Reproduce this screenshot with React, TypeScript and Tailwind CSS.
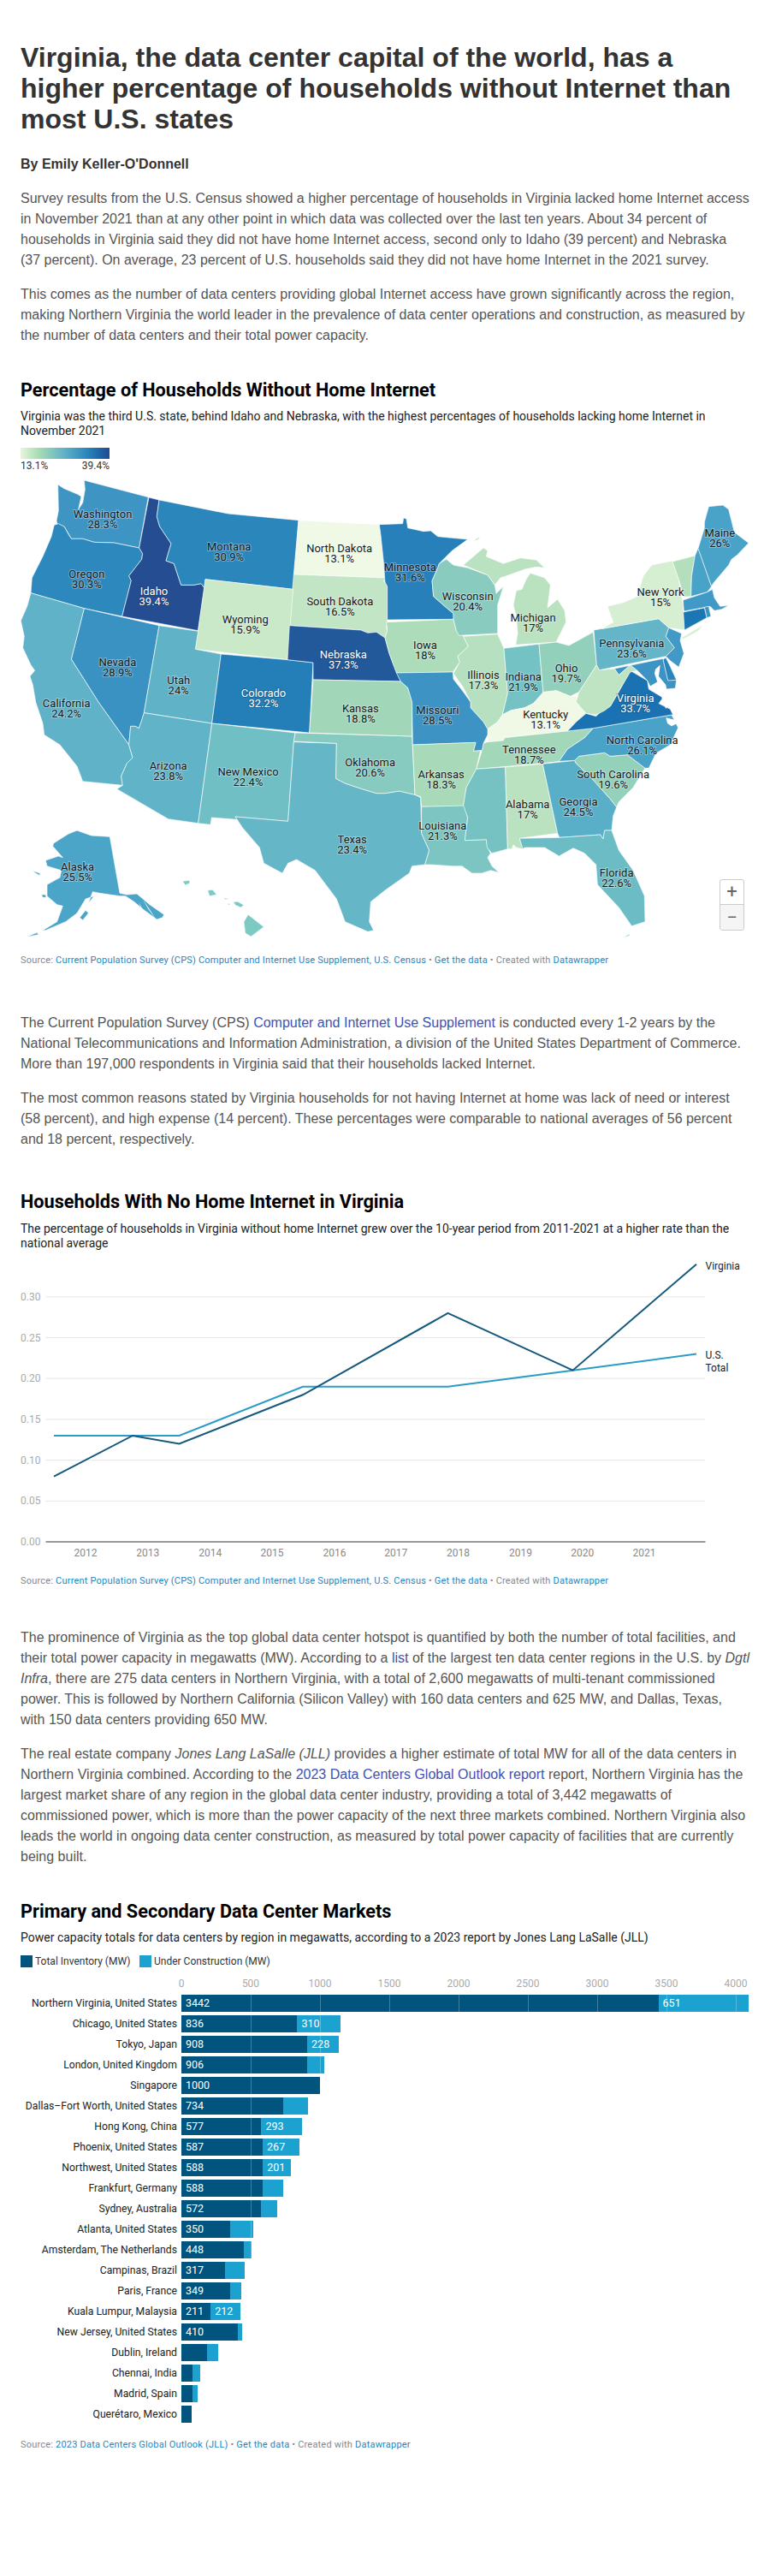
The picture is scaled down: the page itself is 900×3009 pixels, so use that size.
import React from 'react';

// points were read off 3x crops, each quadrant of the map has its own offset
const shift = (s: string, ox: number, oy: number) =>
  s.trim().split(/\s+/).map((p) => {
    const [x, y] = p.split(',').map(Number);
    return `${x + ox},${y + oy}`;
  }).join(' ');
const a = (s: string) => shift(s, 0, 1500);
const b = (s: string) => shift(s, 1350, 1500);
const c = (s: string) => shift(s, 0, 2460);
const d = (s: string) => shift(s, 1350, 2460);

type State = { fill: string; pts: string[] };

const states: State[] = [
  { fill: '#3e95c4', pts: [a('295,183 520,242 488,420 400,402 330,400 290,388 250,388 240,370 225,345 200,335 198,325 205,290 203,198 225,212 272,232 285,240 275,285 290,262 298,215')] }, // WA
  { fill: '#2d88be', pts: [a('205,335 225,345 240,372 250,388 290,388 330,400 400,402 488,420 500,440 497,460 452,518 460,535 428,660 295,632 108,578 112,525 150,450 180,380 190,340')] }, // OR
  { fill: '#254e92', pts: [a('522,243 558,252 550,310 560,345 600,405 582,465 610,475 635,550 680,550 705,545 717,560 695,710 428,660 460,535 452,518 497,460 500,440 488,420')] }, // ID
  { fill: '#2b86bc', pts: [a('558,252 800,300 1047,323 1028,565 720,530 717,560 705,545 680,550 635,550 610,475 582,465 600,405 560,345 550,310')] }, // MT
  { fill: '#f0f8e6', pts: [a('1047,323 1330,338 1335,375 1345,470 1358,525 1030,513')] }, // ND
  { fill: '#c1e5c5', pts: [a('1030,513 1358,525 1345,535 1358,552 1358,680 1355,700 1358,712 1350,735 1320,715 1290,718 1265,708 1015,692')] }, // SD
  { fill: '#c9e9c9', pts: [a('720,530 1028,565 1008,812 685,775')] }, // WY
  { fill: '#3a92c2', pts: [a('295,632 558,692 505,998 495,1030 487,1052 475,1045 458,1045 452,1110 345,960 250,810')] }, // NV
  { fill: '#5fb2c8', pts: [a('108,578 295,632 250,810 345,960'), c('452,150 465,195 445,215 425,260 430,292 290,278 270,225 210,150 155,115 150,75 125,0'), a('115,900 105,870 122,850 108,830 80,770 85,730 73,675 95,625')] }, // CA
  { fill: '#60b3c7', pts: [a('558,692 695,712 685,775 775,792'), c('743,75 505,38')] }, // UT
  { fill: '#247eb8', pts: [a('775,792 1008,812 1098,822'), c('1085,108 743,75')] }, // CO
  { fill: '#61b4c7', pts: [c('505,38 743,75 695,425 590,410 410,305 430,292 425,260 445,215 465,195 452,150 458,85 475,85 487,92 495,70')] }, // AZ
  { fill: '#6fbfc5', pts: [c('743,75 1035,108 1030,140 1010,418 825,402 832,412 742,405 738,430 695,425')] }, // NM
  { fill: '#65b6c6', pts: [c('1030,140 1180,145 1178,268 1210,285 1270,305 1320,320'), d('0,320 50,312 105,325 125,335 128,460 155,520 140,570 95,575 85,600 0,660'), c('1300,700 1295,770 1310,800 1290,805 1210,770 1180,690 1105,590 1040,552 1010,565 990,600 925,565 910,510 850,440 825,402 1010,418')] }, // TX
  { fill: '#87cabf', pts: [c('1035,108'), d('95,120 105,325 50,312 0,320'), c('1320,320 1270,305 1210,285 1178,268 1180,145 1030,138')] }, // OK
  { fill: '#21599b', pts: [a('1015,692 1265,708 1290,718 1320,715 1350,735'), b('15,790 30,830 55,888'), a('1098,882 1098,822 1008,812')] }, // NE
  { fill: '#a1d6b9', pts: [a('1098,882'), b('55,888 80,910 95,960'), d('95,120'), c('1085,108')] }, // KS
  { fill: '#acdcba', pts: [b('5,680 240,670 250,710 275,730 292,765 255,800 262,820 238,855 40,858 15,790 0,735 8,710')] }, // IA
  { fill: '#2880ba', pts: [a('1330,338'), b('62,335 65,315 75,318 80,350 135,362 160,360 185,380 235,385 290,390 235,430 190,475 185,490 165,535 170,590 210,625 240,650 240,670 8,672 8,555 0,540'), a('1345,470 1335,375')] }, // MN
  { fill: '#89cbbe', pts: [b('190,475 215,460 240,480 290,490 360,515 385,550 390,580 415,555 395,620 395,720 260,727 250,710 240,670 240,650 210,625 170,590 165,535 185,490')] }, // WI
  { fill: '#bae2c1', pts: [b('275,480 345,420 360,430 355,450 415,475 475,455 530,462 560,490 530,487 490,495 435,515 405,525 385,550 360,515')] }, // MI upper
  { fill: '#bae2c1', pts: [b('510,508 560,525 580,550 570,630 605,600 630,640 635,680 600,750 458,760 465,720 460,660 450,620 460,570 480,565 495,530')] }, // MI lower
  { fill: '#bae2c1', pts: [b('310,395 335,378 325,392')] },
  { fill: '#b6e0bf', pts: [b('275,730 395,722 417,772 430,930 412,1005'), d('395,70 360,95 345,70 300,20 300,0'), b('275,910 240,860 262,820 255,800 292,765')] }, // IL
  { fill: '#74c2c4', pts: [b('417,772 540,757 555,930 520,965 490,980 440,990 412,1005 430,930')] }, // IN
  { fill: '#93d0bc', pts: [b('540,757 600,750 645,762 730,715 742,830 710,880 680,925 650,940 600,920 555,930')] }, // OH
  { fill: '#f0f8e6', pts: [d('440,30 490,20 520,5 555,-35 600,-40 650,-20 680,-20 670,0 705,40 670,70 640,102 420,125 415,135 360,140 360,95 395,70 412,45')] }, // KY
  { fill: '#a3d7b9', pts: [d('360,140 415,135 420,125 730,92 700,125 640,165 610,208 555,215 320,235 340,170 345,145')] }, // TN
  { fill: '#3d93c3', pts: [b('40,858 238,855 240,880 275,925 300,960'), d('300,20 345,70 360,95 360,115 345,145 340,170 310,172 318,142 97,150 95,0'), b('80,910 55,888')] }, // MO
  { fill: '#a8dab9', pts: [d('97,150 318,142 310,172 335,170 320,235 285,300 275,365 128,367 125,332 105,325')] }, // AR
  { fill: '#7cc5c2', pts: [d('128,367 278,363 290,405 280,485 355,482 360,510 370,530 360,545 375,575 400,598 370,590 340,600 305,600 270,575 235,575 160,570 140,570 155,520 128,460')] }, // LA
  { fill: '#76c2c3', pts: [d('320,235 422,228 430,515 375,530 358,510 355,482 280,485 290,405 275,362 285,300')] }, // MS
  { fill: '#bae2c1', pts: [d('422,228 553,217 605,460 472,478 483,515 460,510 450,500 445,515 430,515')] }, // AL
  { fill: '#5aafc8', pts: [d('553,217 665,205 670,215 720,262 790,340 812,368 800,400 795,450 770,450 765,480 755,465 612,475 605,460')] }, // GA
  { fill: '#6cbcc5', pts: [d('472,478 612,475 755,465 765,480 770,450 795,450 820,520 870,590 910,680 912,770 865,785 820,720 745,640 740,570 700,530 660,512 610,540 560,510 490,510 483,515')] }, // FL
  { fill: '#6cbcc5', pts: [d('835,825 860,812 855,820')] },
  { fill: '#94d1bb', pts: [d('665,205 680,190 770,178 790,190 850,185 912,232 870,300 820,350 812,368 790,340 720,262 670,215')] }, // SC
  { fill: '#49a3c9', pts: [d('610,208 640,165 700,125 730,92 1005,45 1028,90 1000,150 950,180 925,232 912,232 850,185 790,190 770,178 680,190 665,205')] }, // NC
  { fill: '#1b72b3', pts: [d('640,102 670,70 705,40 740,50 770,20'), b('790,975 830,905 860,850 920,885 925,915 975,945 960,965 1000,985 1010,1005'), d('1005,45 730,92')] }, // VA
  { fill: '#bfe4c3', pts: [b('742,830 752,848 805,843 820,865 860,830 885,850 860,855 830,905 790,975 770,990 740,1005 705,1000 670,960 680,925 710,880')] }, // WV
  { fill: '#63b5c7', pts: [b('732,708 960,668 995,700 985,730 1015,770 985,800 752,848 742,830')] }, // PA
  { fill: '#d6eed2', pts: [b('762,703 800,680 780,625 840,610 885,590 905,520 935,480 1008,465 1030,530 1045,620 1050,708 995,700 960,668')] }, // NY
  { fill: '#d6eed2', pts: [b('1040,735 1115,690 1100,710 1045,740')] },
  { fill: '#4099c6', pts: [b('995,700 1040,720 1035,745 1048,790 1030,838 1000,815 985,800 1015,770 985,730')] }, // NJ
  { fill: '#3d93c3', pts: [b('805,843 975,808 992,882 1022,883 1018,912 985,915 955,890 930,905 920,885 885,850 860,830 820,865')] }, // MD
  { fill: '#2b86bc', pts: [b('975,810 985,805 1000,835 1022,883 992,885')] }, // DE
  { fill: '#b3dfbd', pts: [b('1008,468 1087,447 1075,520 1073,590 1048,592 1030,530')] }, // VT
  { fill: '#49a3c9', pts: [b('1098,420 1145,555 1130,575 1073,590 1075,520 1087,447')] }, // NH
  { fill: '#49a3c9', pts: [b('1135,275 1185,270 1205,285 1225,365 1275,403 1235,445 1215,460 1205,480 1150,545 1145,555 1098,422 1120,350 1120,330')] }, // ME
  { fill: '#4099c6', pts: [b('1045,603 1130,575 1148,565 1155,595 1175,625 1205,622 1180,635 1155,640 1140,625 1048,642')] }, // MA
  { fill: '#3d93c3', pts: [b('1120,628 1135,625 1143,660 1128,665')] }, // RI
  { fill: '#1b77b4', pts: [b('1046,645 1120,630 1128,665 1050,708')] }, // CT
  { fill: '#4ba5c9', pts: [c('188,495 240,462 270,450 320,468 385,472 420,670 445,675 480,672 525,710 575,745 570,755 550,762 500,725 470,700 440,680 420,680 350,670 325,665 310,705 330,680 300,690 270,740 230,770 160,800 150,800 200,770 220,715 200,710 165,680 165,640 210,615 215,590 165,575 160,555 205,540 220,545 185,505')] }, // AK
  { fill: '#4ba5c9', pts: [c('280,755 300,730 310,740 290,765')] },
  { fill: '#4ba5c9', pts: [c('145,675 160,675 162,685 150,685')] },
  { fill: '#4ba5c9', pts: [c('115,592 140,600 140,608 125,600')] },
  { fill: '#4ba5c9', pts: [c('95,822 130,808 135,815 100,822')] },
  { fill: '#7ccac3', pts: [c('640,628 665,625 665,635 650,642')] }, // HI
  { fill: '#7ccac3', pts: [c('728,660 745,658 760,675 735,680')] },
  { fill: '#7ccac3', pts: [c('785,686 805,690 790,692')] },
  { fill: '#7ccac3', pts: [c('798,705 808,708 802,712')] },
  { fill: '#7ccac3', pts: [c('818,700 835,700 855,712 845,720 825,712')] },
  { fill: '#7ccac3', pts: [c('870,745 925,788 880,822 860,810 855,770')] },
];

// water cut out of the shapes
const water = [
  b('948,845 965,830 960,870 985,900 995,960 985,985 970,945 985,925 955,890 945,860'),
  d('985,55 1015,62 1025,75 1005,85 990,75'),
  c('500,690 530,735 545,760 520,725'),
  c('485,700 510,745 500,735'),
];

type Label = { name: string; value: string; x: number; y: number; light?: boolean };

const at = (pt: string, ox: number, oy: number) => {
  const [x, y] = pt.split(',').map(Number);
  return { x: x + ox, y: y + oy };
};
const la = (name: string, value: string, pt: string, light?: boolean): Label => ({ name, value, ...at(pt, 0, 1500), light });
const lb = (name: string, value: string, pt: string, light?: boolean): Label => ({ name, value, ...at(pt, 1350, 1500), light });
const lc = (name: string, value: string, pt: string): Label => ({ name, value, ...at(pt, 0, 2460) });
const ld = (name: string, value: string, pt: string): Label => ({ name, value, ...at(pt, 1350, 2460) });

const labels: Label[] = [
  la('Washington', '28.3%', '360,302'),
  la('Oregon', '30.3%', '304,512'),
  la('Idaho', '39.4%', '540,572', true),
  la('Montana', '30.9%', '803,416'),
  la('North Dakota', '13.1%', '1190,422'),
  la('South Dakota', '16.5%', '1192,608'),
  la('Wyoming', '15.9%', '860,672'),
  la('Nebraska', '37.3%', '1204,794', true),
  la('Nevada', '28.9%', '412,821'),
  la('Utah', '24%', '626,883'),
  la('Colorado', '32.2%', '924,929', true),
  la('California', '24.2%', '233,965'),
  la('Kansas', '18.8%', '1264,983'),
  lb('Minnesota', '31.6%', '88,488'),
  lb('Wisconsin', '20.4%', '290,590'),
  lb('Michigan', '17%', '519,665'),
  lb('Iowa', '18%', '141,761'),
  lb('Illinois', '17.3%', '345,866'),
  lb('Indiana', '21.9%', '485,872'),
  lb('Ohio', '19.7%', '636,842'),
  lb('New York', '15%', '966,575'),
  lb('Maine', '26%', '1174,368'),
  lb('Pennsylvania', '23.6%', '865,755'),
  lb('Virginia', '33.7%', '878,947', true),
  ld('Kentucky', '13.1%', '563,44'),
  ld('Missouri', '28.5%', '184,29'),
  ld('North Carolina', '26.1%', '902,134'),
  ld('Tennessee', '18.7%', '505,167'),
  ld('Arkansas', '18.3%', '197,254'),
  ld('South Carolina', '19.6%', '800,254'),
  ld('Georgia', '24.5%', '678,350'),
  ld('Alabama', '17%', '500,359'),
  ld('Louisiana', '21.3%', '202,434'),
  ld('Florida', '22.6%', '812,599'),
  lc('Oklahoma', '20.6%', '1298,212'),
  lc('Arizona', '23.8%', '590,224'),
  lc('New Mexico', '22.4%', '870,245'),
  lc('Texas', '23.4%', '1235,482'),
  lc('Alaska', '25.5%', '272,578'),
];

const UsMap = () => (
  <svg viewBox="0 1650 2700 1650" className="block h-[550px] w-[900px]">
    {states.map((s, i) => (
      <polygon key={i} points={s.pts.join(' ')} fill={s.fill} stroke="#ffffff" strokeOpacity={0.75} strokeWidth={2.5} strokeLinejoin="round" />
    ))}
    {water.map((p, i) => (
      <polygon key={i} points={p} fill="#ffffff" />
    ))}
    {labels.map((l) => (
      <text
        key={l.name}
        x={l.x}
        y={l.y}
        textAnchor="middle"
        fontSize={39}
        className="[font-family:Roboto,sans-serif] [paint-order:stroke]"
        fill={l.light ? '#ffffff' : '#151b1e'}
        stroke={l.light ? 'rgba(0,0,0,0.2)' : 'rgba(255,255,255,0.35)'}
        strokeWidth={6}
      >
        <tspan x={l.x} dy={13}>{l.name}</tspan>
        <tspan x={l.x} dy={36}>{l.value}</tspan>
      </text>
    ))}
  </svg>
);

const vy = (v: number) => 1801 - 954 * v;
const toPts = (rows: number[][]) => rows.map(([x, v]) => `${x},${vy(v)}`).join(' ');
const years = [
  ['2012', 99.9], ['2013', 172.8], ['2014', 245.7], ['2015', 318], ['2016', 391],
  ['2017', 462.7], ['2018', 535.6], ['2019', 608.5], ['2020', 680.8], ['2021', 753],
] as const;

const LineChart = () => (
  <svg viewBox="0 1461 900 364" className="block h-[364px] w-[900px] [font-family:Roboto,sans-serif]">
    {[0.05, 0.1, 0.15, 0.2, 0.25, 0.3].map((v) => (
      <g key={v}>
        <line x1={53.5} x2={824.5} y1={vy(v)} y2={vy(v)} stroke="#e6e6e6" strokeWidth={1} />
        <text x={24} y={vy(v) + 4} fontSize={12} fill="#aaaaaa">{v.toFixed(2)}</text>
      </g>
    ))}
    <line x1={53.5} x2={824.5} y1={1801} y2={1801} stroke="#333333" strokeWidth={1} />
    <text x={24} y={1805} fontSize={12} fill="#aaaaaa">0.00</text>
    {years.map(([y, x]) => (
      <text key={y} x={x} y={1818} textAnchor="middle" fontSize={12} fill="#888888">{y}</text>
    ))}
    <polyline points={toPts([[63, 0.13], [209.5, 0.13], [354, 0.19], [523.5, 0.19], [669.5, 0.21], [814, 0.23]])} fill="none" stroke="#2a9cc6" strokeWidth={2} />
    <polyline points={toPts([[63, 0.08], [155, 0.13], [209.5, 0.12], [354, 0.18], [523.5, 0.28], [669.5, 0.21], [814, 0.34]])} fill="none" stroke="#15597c" strokeWidth={2} />
    <text x={824.5} y={1483} fontSize={12} fill="#222222">Virginia</text>
    <text x={824.5} y={1587} fontSize={12} fill="#222222">U.S.</text>
    <text x={824.5} y={1602} fontSize={12} fill="#222222">Total</text>
  </svg>
);

const PX_PER_MW = 0.162;

const markets = [
  { name: 'Northern Virginia, United States', total: 3442, build: 651, showTotal: true, showBuild: true },
  { name: 'Chicago, United States', total: 836, build: 310, showTotal: true, showBuild: true },
  { name: 'Tokyo, Japan', total: 908, build: 228, showTotal: true, showBuild: true },
  { name: 'London, United Kingdom', total: 906, build: 122, showTotal: true, showBuild: false },
  { name: 'Singapore', total: 1000, build: 0, showTotal: true, showBuild: false },
  { name: 'Dallas–Fort Worth, United States', total: 734, build: 180, showTotal: true, showBuild: false },
  { name: 'Hong Kong, China', total: 577, build: 293, showTotal: true, showBuild: true },
  { name: 'Phoenix, United States', total: 587, build: 267, showTotal: true, showBuild: true },
  { name: 'Northwest, United States', total: 588, build: 201, showTotal: true, showBuild: true },
  { name: 'Frankfurt, Germany', total: 588, build: 149, showTotal: true, showBuild: false },
  { name: 'Sydney, Australia', total: 572, build: 119, showTotal: true, showBuild: false },
  { name: 'Atlanta, United States', total: 350, build: 171, showTotal: true, showBuild: false },
  { name: 'Amsterdam, The Netherlands', total: 448, build: 59, showTotal: true, showBuild: false },
  { name: 'Campinas, Brazil', total: 317, build: 140, showTotal: true, showBuild: false },
  { name: 'Paris, France', total: 349, build: 83, showTotal: true, showBuild: false },
  { name: 'Kuala Lumpur, Malaysia', total: 211, build: 212, showTotal: true, showBuild: true },
  { name: 'New Jersey, United States', total: 410, build: 12, showTotal: true, showBuild: false },
  { name: 'Dublin, Ireland', total: 188, build: 78, showTotal: false, showBuild: false },
  { name: 'Chennai, India', total: 81, build: 57, showTotal: false, showBuild: false },
  { name: 'Madrid, Spain', total: 81, build: 36, showTotal: false, showBuild: false },
  { name: 'Querétaro, Mexico', total: 71, build: 0, showTotal: false, showBuild: false },
];

const ticks = [0, 500, 1000, 1500, 2000, 2500, 3000, 3500, 4000];

const BarChart = () => (
  <div className="[font-family:Roboto,sans-serif]">
    <div className="mt-3 ml-[147.5px] flex h-[14px] text-[12px] leading-[14px] text-[#aaaaaa]">
      {ticks.map((t) => (
        <span key={t} className="w-[81px] shrink-0 text-center">{t}</span>
      ))}
    </div>
    <div className="mt-[6px] flex flex-col gap-1">
      {markets.map((m) => (
        <div key={m.name} className="flex h-5 items-center">
          <div className="w-[183px] text-right text-[12.2px] leading-5 text-[#222222]">{m.name}</div>
          <div className="relative ml-[5px] flex h-5 text-[12.5px] leading-5 text-white">
            <div className="h-5 bg-[#01547d] pl-[5px]" style={{ width: m.total * PX_PER_MW }}>
              {m.showTotal ? m.total : ''}
            </div>
            {m.build > 0 && (
              <div className="h-5 bg-[#1ba2d0] pl-[5px]" style={{ width: m.build * PX_PER_MW }}>
                {m.showBuild ? m.build : ''}
              </div>
            )}
            {ticks.slice(1).filter((t) => t < m.total + m.build).map((t) => (
              <div key={t} className="absolute top-0 h-5 w-px bg-white/25" style={{ left: t * PX_PER_MW }} />
            ))}
          </div>
        </div>
      ))}
    </div>
  </div>
);

const ChartSource = ({ label, className }: { label: string; className: string }) => (
  <p className={`${className} text-[11px] leading-[14px] tracking-[0.2px] text-[#888888] [font-family:Roboto,sans-serif]`}>
    Source: <a className="text-[#2487c2]">{label}</a>
    {' • '}
    <a className="text-[#2487c2]">Get the data</a>
    {' • Created with '}
    <a className="text-[#2487c2]">Datawrapper</a>
  </p>
);

const Link = ({ children }: { children: React.ReactNode }) => <a className="text-[#3f51b5]">{children}</a>;

const chartTitle = "text-[21.7px] font-bold leading-[26px] text-black [font-family:Roboto,sans-serif]";
const chartSub = "text-[14px] leading-[17px] text-[#222222] [font-family:Roboto,sans-serif]";
const body = "text-[16px] leading-6 text-[#555555]";

export default function App() {
  return (
    <div className="min-h-[3009px] w-[900px] bg-white [font-family:'Liberation_Sans',Arial,sans-serif]">
      <div className="px-6 pt-[49px]">
        <h1 className="text-[32px] font-bold leading-9 text-[#333333]">
          Virginia, the data center capital of the world, has a higher percentage of households without Internet than most U.S. states
        </h1>
        <p className="mt-[23px] text-[16px] font-bold leading-6 text-[#333333]">By Emily Keller-O'Donnell</p>
        <p className={`mt-4 ${body}`}>
          Survey results from the U.S. Census showed a higher percentage of households in Virginia lacked home Internet access in November 2021 than at any other point in which data was collected over the last ten years. About 34 percent of households in Virginia said they did not have home Internet access, second only to Idaho (39 percent) and Nebraska (37 percent). On average, 23 percent of U.S. households said they did not have home Internet in the 2021 survey.
        </p>
        <p className={`mt-4 ${body}`}>
          This comes as the number of data centers providing global Internet access have grown significantly across the region, making Northern Virginia the world leader in the prevalence of data center operations and construction, as measured by the number of data centers and their total power capacity.
        </p>
        <h2 className={`mt-[39px] ${chartTitle}`}>Percentage of Households Without Home Internet</h2>
        <p className={`mt-[9px] ${chartSub}`}>
          Virginia was the third U.S. state, behind Idaho and Nebraska, with the highest percentages of households lacking home Internet in November 2021
        </p>
        <div className="mt-[11px] w-[104px] [font-family:Roboto,sans-serif]">
          <div className="h-[13px] bg-[linear-gradient(to_right,#e8f5dc,#a8ddb5_20%,#5db0c7_50%,#2a85bb_75%,#1d62a6_90%,#254a8f)]" />
          <div className="flex h-[14px] justify-between text-[12px] leading-[16px] text-[#333333]">
            <span>13.1%</span>
            <span>39.4%</span>
          </div>
        </div>
      </div>

      <div className="relative">
        <UsMap />
        <div className="absolute top-[477px] left-[841px] flex w-[29px] flex-col overflow-hidden rounded-[3px] border border-[#cccccc] bg-white text-[22px] leading-[28px] text-[#666666] [font-family:Roboto,sans-serif]">
          <button className="h-[29px] border-b border-[#cccccc] text-center">+</button>
          <button className="h-[29px] bg-[#f5f5f5] text-center">−</button>
        </div>
      </div>

      <div className="px-6">
        <ChartSource className="mt-[15px]" label="Current Population Survey (CPS) Computer and Internet Use Supplement, U.S. Census" />
        <p className={`mt-[54px] ${body}`}>
          The Current Population Survey (CPS) <Link>Computer and Internet Use Supplement</Link> is conducted every 1-2 years by the National Telecommunications and Information Administration, a division of the United States Department of Commerce. More than 197,000 respondents in Virginia said that their households lacked Internet.
        </p>
        <p className={`mt-4 ${body}`}>
          The most common reasons stated by Virginia households for not having Internet at home was lack of need or interest (58 percent), and high expense (14 percent). These percentages were comparable to national averages of 56 percent and 18 percent, respectively.
        </p>
        <h2 className={`mt-[48px] ${chartTitle}`}>Households With No Home Internet in Virginia</h2>
        <p className={`mt-[10px] ${chartSub}`}>
          The percentage of households in Virginia without home Internet grew over the 10-year period from 2011-2021 at a higher rate than the national average
        </p>
      </div>

      <LineChart />

      <div className="px-6">
        <ChartSource className="mt-[15px]" label="Current Population Survey (CPS) Computer and Internet Use Supplement, U.S. Census" />
        <p className={`mt-[47px] ${body}`}>
          The prominence of Virginia as the top global data center hotspot is quantified by both the number of total facilities, and their total power capacity in megawatts (MW). According to a <Link>list</Link> of the largest ten data center regions in the U.S. by <em>Dgtl Infra</em>, there are 275 data centers in Northern Virginia, with a total of 2,600 megawatts of multi-tenant commissioned power. This is followed by Northern California (Silicon Valley) with 160 data centers and 625 MW, and Dallas, Texas, with 150 data centers providing 650 MW.
        </p>
        <p className={`mt-4 ${body}`}>
          The real estate company <em>Jones Lang LaSalle (JLL)</em> provides a higher estimate of total MW for all of the data centers in Northern Virginia combined. According to the <Link>2023 Data Centers Global Outlook report</Link> report, Northern Virginia has the largest market share of any region in the global data center industry, providing a total of 3,442 megawatts of commissioned power, which is more than the power capacity of the next three markets combined. Northern Virginia also leads the world in ongoing data center construction, as measured by total power capacity of facilities that are currently being built.
        </p>
        <h2 className={`mt-[39px] ${chartTitle}`}>Primary and Secondary Data Center Markets</h2>
        <p className={`mt-[9px] ${chartSub}`}>
          Power capacity totals for data centers by region in megawatts, according to a 2023 report by Jones Lang LaSalle (JLL)
        </p>
        <div className="mt-3 flex h-[14px] items-center text-[12px] leading-[14px] text-[#333333] [font-family:Roboto,sans-serif]">
          <span className="h-[14px] w-[14px] bg-[#01547d]" />
          <span className="ml-[3px] w-[122px]">Total Inventory (MW)</span>
          <span className="h-[14px] w-[14px] bg-[#1ba2d0]" />
          <span className="ml-[3px]">Under Construction (MW)</span>
        </div>
        <BarChart />
        <ChartSource className="mt-[19px]" label="2023 Data Centers Global Outlook (JLL)" />
      </div>
    </div>
  );
}
